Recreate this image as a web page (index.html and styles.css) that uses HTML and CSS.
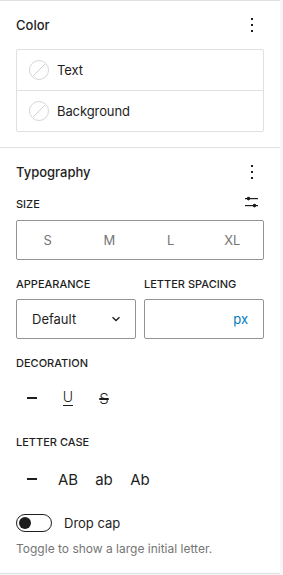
FILE: index.html
```html
<!DOCTYPE html>
<html>
<head>
<meta charset="utf-8">
<link rel="stylesheet" href="styles.css">
</head>
<body>
<div class="panel">
  <section class="section color-section">
    <div class="header">
      <h2 class="title">Color</h2>
      <button class="icon-btn" aria-label="Options">
        <svg width="24" height="24" viewBox="0 0 24 24"><path d="M13 19h-2v-2h2v2zm0-6h-2v-2h2v2zm0-6h-2V5h2v2z" fill="#1e1e1e"/></svg>
      </button>
    </div>
    <div class="color-box">
      <div class="color-row">
        <span class="swatch"><svg width="20" height="20" viewBox="0 0 20 20"><circle cx="10" cy="10" r="9.5" fill="#fff" stroke="#d6d6d6"/><line x1="4" y1="16" x2="16" y2="4" stroke="#d0d0d0" stroke-width="1"/></svg></span>
        <span class="color-label">Text</span>
      </div>
      <div class="color-row">
        <span class="swatch"><svg width="20" height="20" viewBox="0 0 20 20"><circle cx="10" cy="10" r="9.5" fill="#fff" stroke="#d6d6d6"/><line x1="4" y1="16" x2="16" y2="4" stroke="#d0d0d0" stroke-width="1"/></svg></span>
        <span class="color-label">Background</span>
      </div>
    </div>
  </section>
  <section class="section typo-section">
    <div class="header">
      <h2 class="title">Typography</h2>
      <button class="icon-btn" aria-label="Options">
        <svg width="24" height="24" viewBox="0 0 24 24"><path d="M13 19h-2v-2h2v2zm0-6h-2v-2h2v2zm0-6h-2V5h2v2z" fill="#1e1e1e"/></svg>
      </button>
    </div>
    <div class="size-row">
      <span class="label">Size</span>
      <svg class="sliders" width="16" height="14" viewBox="0 0 16 14"><rect x="2" y="3" width="13" height="1.2" fill="#1e1e1e"/><circle cx="5.5" cy="3.6" r="1.8" fill="#1e1e1e"/><rect x="2" y="10" width="13" height="1.2" fill="#1e1e1e"/><circle cx="11.5" cy="10.6" r="1.8" fill="#1e1e1e"/></svg>
    </div>
    <div class="size-group">
      <span class="size-opt">S</span>
      <span class="size-opt">M</span>
      <span class="size-opt">L</span>
      <span class="size-opt">XL</span>
    </div>
    <div class="two-col">
      <div class="field">
        <span class="label">Appearance</span>
        <div class="input select">
          <span>Default</span>
          <svg width="10" height="6" viewBox="0 0 10 6"><path d="M1.5 1.2 L5 4.5 L8.5 1.2" fill="none" stroke="#1e1e1e" stroke-width="1.3"/></svg>
        </div>
      </div>
      <div class="field">
        <span class="label">Letter spacing</span>
        <div class="input unit">
          <span class="px">px</span>
        </div>
      </div>
    </div>
    <span class="label deco-label">Decoration</span>
    <div class="btn-row deco-row">
      <span class="opt"><span class="dash"></span></span>
      <span class="opt"><span class="underline">U</span></span>
      <span class="opt"><span class="strike">S</span></span>
    </div>
    <span class="label case-label">Letter case</span>
    <div class="btn-row case-row">
      <span class="opt"><span class="dash"></span></span>
      <span class="opt case">AB</span>
      <span class="opt case">ab</span>
      <span class="opt case">Ab</span>
    </div>
    <div class="toggle-row">
      <span class="toggle"><span class="knob"></span></span>
      <span class="toggle-label">Drop cap</span>
    </div>
    <p class="help">Toggle to show a large initial letter.</p>
  </section>
</div>
</body>
</html>
```

FILE: styles.css
```css
* { box-sizing: border-box; }
html, body { margin: 0; padding: 0; }
body {
  background: #f7f7fb;
  font-family: Inter, "Noto Sans", sans-serif;
  color: #1e1e1e;
  font-size: 13px;
  width: 283px;
  height: 575px;
  overflow: hidden;
}
.panel {
  width: 280px;
  background: #fff;
  border-top: 1px solid #e0e0e0;
}
.section {
  padding: 12px 16px 15px;
  border-bottom: 1px solid #e0e0e0;
  display: flex;
  flex-direction: column;
}
.header {
  display: flex;
  align-items: center;
  justify-content: space-between;
  height: 24px;
}
.title {
  margin: 0;
  font-size: 13px;
  font-weight: 500;
}
.icon-btn {
  width: 24px;
  height: 24px;
  padding: 0;
  border: 0;
  background: none;
  display: flex;
}
.color-box {
  margin-top: 12px;
  border: 1px solid #e0e0e0;
  border-radius: 2px;
}
.color-row {
  height: 40px;
  display: flex;
  align-items: center;
  padding-left: 12px;
  gap: 8px;
}
.color-row + .color-row { border-top: 1px solid #e0e0e0; height: 41px; }
.swatch { display: flex; width: 20px; height: 20px; }
.color-label { font-size: 13px; letter-spacing: -0.1px; }

.typo-section { padding-bottom: 16px; }
.label {
  font-size: 11px;
  font-weight: 500;
  text-transform: uppercase;
  line-height: 16px;
  display: block;
}
.size-row {
  margin-top: 12px;
  height: 16px;
  display: flex;
  align-items: center;
  justify-content: space-between;
}
.sliders { margin-top: -4px; margin-right: 5px; }
.size-group {
  margin-top: 8px;
  height: 40px;
  border: 1px solid #949494;
  border-radius: 2px;
  display: grid;
  grid-template-columns: repeat(4, 1fr);
  align-items: center;
}
.size-opt { text-align: center; color: #757575; font-size: 13px; }
.two-col {
  margin-top: 16px;
  display: grid;
  grid-template-columns: 1fr 1fr;
  gap: 8px;
}
.field { display: flex; flex-direction: column; gap: 7px; }
.input {
  height: 40px;
  border: 1px solid #949494;
  border-radius: 2px;
  display: flex;
  align-items: center;
  font-size: 13px;
}
.select { padding: 0 14px 0 15px; justify-content: space-between; }
.unit { justify-content: flex-end; padding-right: 15px; }
.px { color: #007cba; font-size: 13px; }
.deco-label { margin-top: 16px; }
.btn-row { display: flex; gap: 4px; }
.deco-row { margin-top: 11px; }
.case-label { margin-top: 20px; }
.case-row { margin-top: 13px; }
.opt {
  width: 32px;
  height: 32px;
  display: flex;
  align-items: center;
  justify-content: center;
  font-size: 15px;
}
.dash { width: 10px; height: 1.5px; background: #1e1e1e; }
.underline {
  font-size: 14px;
  font-weight: 300;
  line-height: 12px;
  border-bottom: 1.5px solid #1e1e1e;
  padding-bottom: 2px;
}
.strike {
  font-size: 15px;
  font-weight: 300;
  text-decoration: line-through;
  text-decoration-thickness: 1.5px;
}
.case { font-size: 15px; font-weight: 400; }
.toggle-row {
  margin-top: 19px;
  display: flex;
  align-items: center;
  gap: 12px;
  height: 18px;
}
.toggle {
  width: 36px;
  height: 18px;
  border: 1px solid #1e1e1e;
  border-radius: 9px;
  display: flex;
  align-items: center;
  padding-left: 2px;
}
.knob { width: 12px; height: 12px; border-radius: 50%; background: #1e1e1e; }
.toggle-label { font-size: 13px; }
.help {
  margin: 9px 0 0;
  font-size: 12px;
  line-height: 16px;
  color: #757575;
}
```
